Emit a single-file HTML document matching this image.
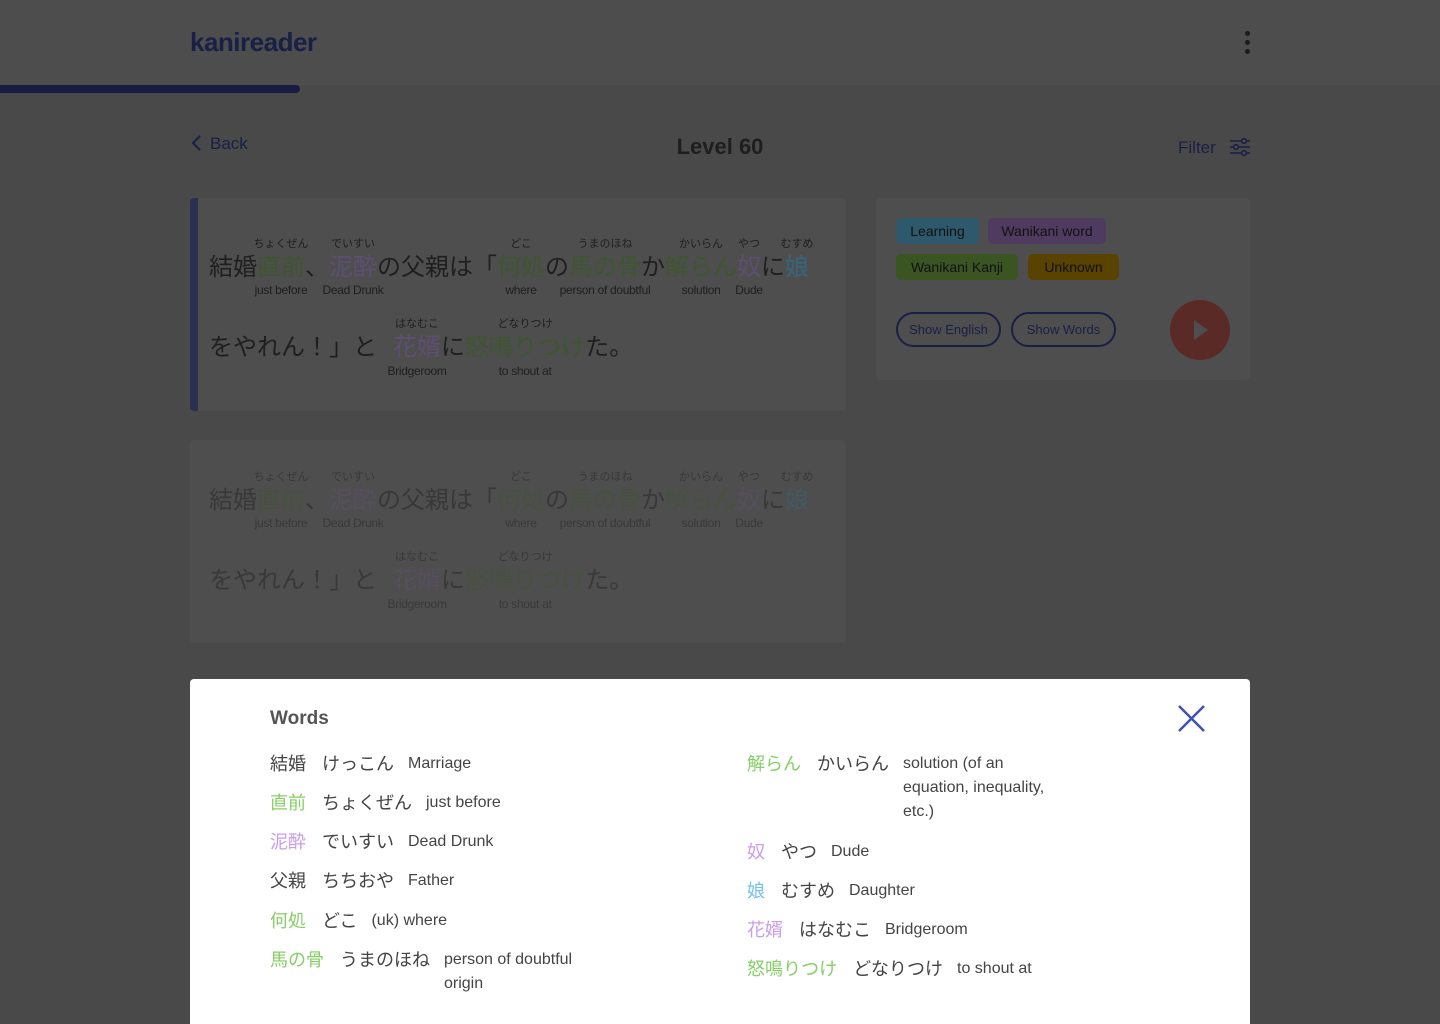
<!DOCTYPE html>
<html><head><meta charset="utf-8">
<style>
*{margin:0;padding:0;box-sizing:border-box}
body{width:1440px;height:1024px;overflow:hidden;background:#494949;font-family:"Liberation Sans","Noto Sans CJK JP",sans-serif;position:relative;color:#222}
.hdr{position:absolute;left:0;top:0;width:1440px;height:85px;background:#4d4d4d}
.logo{position:absolute;left:190px;top:27px;font-size:26px;font-weight:bold;color:#1a1f45;letter-spacing:-0.5px}
.dots{position:absolute;left:1245px;top:31px}
.dots i{display:block;width:5px;height:5px;border-radius:50%;background:#1c1c1c;margin-bottom:4px}
.prog{position:absolute;left:0;top:85px;width:300px;height:8px;background:#181c42;border-radius:0 4px 4px 0}
.back{position:absolute;left:190px;top:134px;font-size:17px;color:#1a1f45}
.back svg{vertical-align:-3px;margin-right:6px}
.lvl{position:absolute;left:0;width:1440px;text-align:center;top:134px;font-size:22px;font-weight:bold;color:#1e1e1e}
.filter{position:absolute;left:1178px;top:137px;font-size:17px;color:#1a1f45}
.card{position:absolute;background:#4e4e4e;border-radius:4px}
.c1{left:190px;top:198px;width:656px;height:213px;border-left:8px solid #2c3050}
.c2{left:190px;top:440px;width:656px;height:203px}
.c3{left:876px;top:198px;width:374px;height:182px}
.sent{position:absolute;left:209px;font-size:24px;line-height:28px;white-space:nowrap;color:#1f1f1f}
.w{position:relative;display:inline-block}
.w .r,.w .g{position:absolute;left:50%;transform:translateX(-50%);white-space:nowrap;color:#1e1e1e}
.w .r{top:-24px;font-size:11px}
.w .g{top:22px;font-size:12px;letter-spacing:-0.3px}
.gr{color:#3f5630}.pu{color:#5e4f72}.bl{color:#35657f}
.fade{opacity:.45}
.tag{position:absolute;height:26px;line-height:26px;border-radius:5px;font-size:14px;color:#111;text-align:center}
.btn{position:absolute;top:312px;height:35px;border:2px solid #1a1f45;border-radius:18px;font-size:13px;color:#1a1f45;text-align:center;line-height:31px}
.play{position:absolute;left:1170px;top:300px;width:60px;height:60px;border-radius:50%;background:#5a2a26}
.ov{position:absolute;left:190px;top:679px;width:1060px;height:345px;background:#fff;border-radius:4px 4px 0 0}
.ttl{position:absolute;left:80px;top:29px;font-size:19px;font-weight:bold;color:#555}
.row{position:absolute;display:flex;font-size:17px;color:#444;line-height:24px}
.row .k{font-size:18px;margin-right:16px}
.row .a{font-size:18px;margin-right:14px}
.row .e{font-size:16px;width:165px}
.G{color:#86cf66}.P{color:#c99cf0}.B{color:#74c2f0}
</style></head><body>
<div class="hdr"><div class="logo">kanireader</div><div class="dots"><i></i><i></i><i></i></div></div>
<div class="prog"></div>
<div class="back"><svg width="14" height="18" viewBox="0 0 14 18"><path d="M10 2 L3 9 L10 16" fill="none" stroke="#1a1f45" stroke-width="2"/></svg>Back</div>
<div class="lvl">Level 60</div>
<div class="filter">Filter <svg width="22" height="20" viewBox="0 0 22 20" style="vertical-align:-4px;margin-left:8px"><g stroke="#1a1f45" stroke-width="1.6" fill="#4d4d4d"><line x1="1" y1="4" x2="21" y2="4"/><line x1="1" y1="10" x2="21" y2="10"/><line x1="1" y1="16" x2="21" y2="16"/><circle cx="15" cy="4" r="2.3"/><circle cx="7" cy="10" r="2.3"/><circle cx="15" cy="16" r="2.3"/></g></svg></div>

<div class="card c1"></div>
<div class="card c2"></div>
<div class="card c3"></div>

<div class="sent" style="top:254px">結婚<span class="w gr">直前<span class="r">ちょくぜん</span><span class="g">just before</span></span>、<span class="w pu">泥酔<span class="r">でいすい</span><span class="g">Dead Drunk</span></span>の父親は「<span class="w gr">何処<span class="r">どこ</span><span class="g">where</span></span>の<span class="w gr">馬の骨<span class="r">うまのほね</span><span class="g">person of doubtful</span></span>か<span class="w gr">解らん<span class="r">かいらん</span><span class="g">solution</span></span><span class="w pu">奴<span class="r">やつ</span><span class="g">Dude</span></span>に<span class="w bl">娘<span class="r">むすめ</span></span></div>
<div class="sent" style="top:334px">をやれん！」と<span class="w pu" style="margin-left:16px">花婿<span class="r">はなむこ</span><span class="g" style="top:23px">Bridgeroom</span></span>に<span class="w gr">怒鳴りつけ<span class="r">どなりつけ</span><span class="g" style="top:23px">to shout at</span></span>た。</div>

<div class="fade">
<div class="sent" style="top:487px">結婚<span class="w gr">直前<span class="r">ちょくぜん</span><span class="g">just before</span></span>、<span class="w pu">泥酔<span class="r">でいすい</span><span class="g">Dead Drunk</span></span>の父親は「<span class="w gr">何処<span class="r">どこ</span><span class="g">where</span></span>の<span class="w gr">馬の骨<span class="r">うまのほね</span><span class="g">person of doubtful</span></span>か<span class="w gr">解らん<span class="r">かいらん</span><span class="g">solution</span></span><span class="w pu">奴<span class="r">やつ</span><span class="g">Dude</span></span>に<span class="w bl">娘<span class="r">むすめ</span></span></div>
<div class="sent" style="top:567px">をやれん！」と<span class="w pu" style="margin-left:16px">花婿<span class="r">はなむこ</span><span class="g" style="top:23px">Bridgeroom</span></span>に<span class="w gr">怒鳴りつけ<span class="r">どなりつけ</span><span class="g" style="top:23px">to shout at</span></span>た。</div>
</div>

<div class="tag" style="left:896px;top:218px;width:83px;background:#2e596c">Learning</div>
<div class="tag" style="left:988px;top:218px;width:118px;background:#4f3b5f">Wanikani word</div>
<div class="tag" style="left:896px;top:254px;width:122px;background:#3a5522">Wanikani Kanji</div>
<div class="tag" style="left:1028px;top:254px;width:91px;background:#5a4300">Unknown</div>
<div class="btn" style="left:896px;width:105px">Show English</div>
<div class="btn" style="left:1011px;width:105px">Show Words</div>
<div class="play"><svg width="60" height="60" viewBox="0 0 60 60"><path d="M24 20 L38 30 L24 40 Z" fill="#4e4e4e"/></svg></div>

<div class="ov">
<div class="ttl">Words</div>
<svg style="position:absolute;left:988px;top:26px" width="27" height="27" viewBox="0 0 27 27"><path d="M1 1 L26 26 M26 1 L1 26" stroke="#3f51b5" stroke-width="2.5"/></svg>
<div class="row" style="left:80px;top:73px"><span class="k">結婚</span><span class="a">けっこん</span><span class="e">Marriage</span></div>
<div class="row" style="left:80px;top:112px"><span class="k G">直前</span><span class="a">ちょくぜん</span><span class="e">just before</span></div>
<div class="row" style="left:80px;top:151px"><span class="k P">泥酔</span><span class="a">でいすい</span><span class="e">Dead Drunk</span></div>
<div class="row" style="left:80px;top:190px"><span class="k">父親</span><span class="a">ちちおや</span><span class="e">Father</span></div>
<div class="row" style="left:80px;top:230px"><span class="k G">何処</span><span class="a">どこ</span><span class="e">(uk) where</span></div>
<div class="row" style="left:80px;top:269px"><span class="k G">馬の骨</span><span class="a">うまのほね</span><span class="e">person of doubtful origin</span></div>
<div class="row" style="left:557px;top:73px"><span class="k G">解らん</span><span class="a">かいらん</span><span class="e" style="width:160px">solution (of an equation, inequality, etc.)</span></div>
<div class="row" style="left:557px;top:161px"><span class="k P">奴</span><span class="a">やつ</span><span class="e">Dude</span></div>
<div class="row" style="left:557px;top:200px"><span class="k B">娘</span><span class="a">むすめ</span><span class="e">Daughter</span></div>
<div class="row" style="left:557px;top:239px"><span class="k P">花婿</span><span class="a">はなむこ</span><span class="e">Bridgeroom</span></div>
<div class="row" style="left:557px;top:278px"><span class="k G">怒鳴りつけ</span><span class="a">どなりつけ</span><span class="e">to shout at</span></div>
</div>
</body></html>
